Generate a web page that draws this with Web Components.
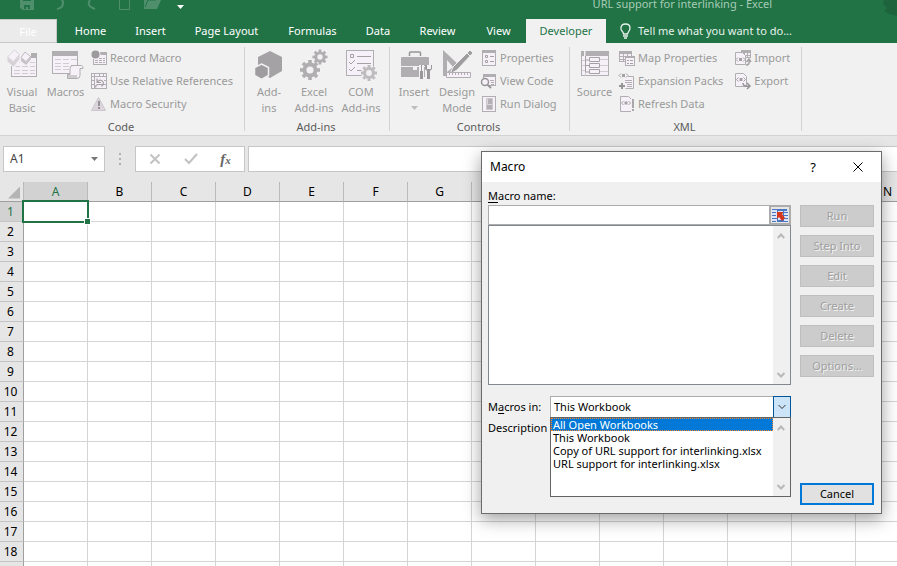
<!DOCTYPE html>
<html lang="en">
<head>
<meta charset="utf-8">
<title>URL support for interlinking - Excel</title>
<style>
html, body { height: 100%; margin: 0; overflow: hidden; }
body { font: 11px/16px "Noto Sans", "Open Sans", sans-serif; color: #000; }
</style>
</head>
<body>
<excel-window></excel-window>
<script>
const define = (name, html) => customElements.define(name, class extends HTMLElement {
  connectedCallback() {
    if (this.shadowRoot) return;
    const root = this.attachShadow({ mode: 'open' });
    const t = document.createElement('template');
    t.innerHTML = typeof html === 'function' ? html(this) : html;
    root.append(t.content.cloneNode(true));
  }
});

/* ---------- icons ---------- */
const G = '#b1aeb1', D = '#a5a2a5', P = '#f6f1f8', L = '#cfcbcf';
const sheet = (x, y, w, h, bar) => `<rect x="${x + .5}" y="${y + .5}" width="${w - 1}" height="${h - 1}" fill="${P}" stroke="${G}"/><rect x="${x}" y="${y}" width="${w}" height="${bar}" fill="${G}"/>`;
const gear = (cx, cy, r, c) => {
  let s = '';
  for (let i = 0; i < 4; i++) s += `<rect x="${cx - r * .18}" y="${cy - r}" width="${r * .36}" height="${r * 2}" fill="${c}" transform="rotate(${i * 45} ${cx} ${cy})"/>`;
  return s + `<circle cx="${cx}" cy="${cy}" r="${r * .75}" fill="${c}"/><circle cx="${cx}" cy="${cy}" r="${r * .36}" fill="#f1f1f1"/>`;
};
const code = (x, y) => `<path d="M${x + 2} ${y - 2}l-2 2 2 2M${x + 7} ${y - 2}l2 2-2 2" fill="none" stroke="${D}"/><rect x="${x + 3}" y="${y - 1.5}" width="3" height="3" fill="${D}"/>`;
const ICONS = {
  vb: [32, 32, `<rect x="5.500" y="8.500" width="25" height="20" fill="${P}" stroke="${G}"/><path d="M25 5h6v5h-6z" fill="${G}"/><path d="M9 14.500h5m2 0h6m2 0h5M8 18.500h6m2 0h6m2 0h5M8 22.500h6m2 0h6m2 0h5M8 25.500h6m2 0h6m2 0h5" stroke="${L}"/><path d="M9 1l5 4 4-3 7 6-6 8-5-2-6 6-8-6z" fill="#f1f1f1"/><path d="M8.500 2l5 4.500-6 7-6-4.500z" fill="${P}" stroke="${L}" stroke-width=".8"/><path d="M1.500 9.500l6 4.500 6-7v4l-6 7.500-6-5z" fill="#d6d1d7"/><path d="M19 4l5.500 4.500-4.500 5-5-4z" fill="${P}" stroke="${G}" stroke-width=".8"/><path d="M15 10l5 4 5-5.500v3l-5 5.500-5-4z" fill="#c6c1c7"/>`],
  macros: [32, 32, sheet(2, 3, 26, 23, 5) + `<path d="M5 11.500h6m2 0h6m2 0h6M5 15.500h6m2 0h6M5 18.500h6m2 0h6M5 21.500h6m2 0h6" stroke="${L}"/><path d="M21 17.500h10.500q1.500 0 1.500 3h-3v7q0 3-3 3h-9.500v-4h2.500v-6q0-3 3-3z" fill="${P}" stroke="${G}"/><path d="M18 27h9v3h-9z" fill="${L}"/>`],
  record: [16, 16, sheet(2, 2, 14, 13, 3) + `<path d="M4 8.500h3m1 0h3m1 0h2M4 10.500h3m1 0h3m1 0h2M4 12.500h3m1 0h3m1 0h2" stroke="${G}"/><circle cx="4.500" cy="4.500" r="5" fill="#f1f1f1"/><circle cx="4.500" cy="4.500" r="4" fill="#9d9a9d"/>`],
  relref: [16, 16, `<rect x=".5" y=".5" width="15" height="15" fill="${P}" stroke="${G}"/><path d="M0 3.500h16M0 7.500h4M0 11.500h4M3.500 0v16M8.500 0v4M12.500 0v4M13 7.500h3M13 11.500h3" stroke="${G}"/><path d="M4.500 14.500q0-3 3-3h6M6 5.500v4h4M6.500 9q3-4 6 .5 0 2-2 4" fill="none" stroke="${D}" stroke-width="1.200"/>`],
  warn: [16, 16, `<path d="M7.500 1.500l7 13h-14z" fill="#dcd6dc" stroke="#cbc6cb"/><path d="M7 5h2v5H7zM7 11h2v2H7z" fill="#969396"/>`],
  addins: [32, 32, `<path d="M17 3l12 6v14l-12 7-12-7V9z" fill="#a5a2a5"/><path d="M8.500 16l7 3.500v8l-7 4-7-4v-8z" fill="#9f9c9f" stroke="#f1f1f1" stroke-width="1.500"/>`],
  gears: [32, 32, gear(12, 22, 10, G) + gear(22, 9, 7.5, G)],
  com: [32, 32, `<rect x="1.500" y="2.500" width="27" height="25" fill="${P}" stroke="${G}"/><path d="M5.500 6.500h3v3h-3zM4 14l2 2 4-4M4 21l2 2 4-4M12 8.500h14M12 15.500h14M12 22.500h6" fill="none" stroke="${D}"/><circle cx="24" cy="25" r="8" fill="#f1f1f1"/>` + gear(24, 25, 8, '#bfbcbf')],
  insert: [32, 32, `<path d="M11.500 8V5q0-1 1-1h9q1 0 1 1v3" fill="none" stroke="#979497" stroke-width="1.500"/><path d="M4 9h26q1 0 1 1v8H3v-8q0-1 1-1zM3 19h12v3h4v-3h12v10H3z" fill="${G}"/><path d="M21 17h5v15h-5zM27 17h6v15h-6z" fill="#f1f1f1"/><path d="M23 17h1v6h1v8h-3v-8h1zM27 17v4l2 2v8h3v-8l2-2v-4h-1v4h-4v-4z" fill="#9b989b"/><path d="M15 19h4v3h-4z" fill="#f1f1f1"/>`],
  design: [32, 32, `<path d="M2 2v26h6l11-10zM6 12l6 7-6 5z" fill="${G}" fill-rule="evenodd"/><path d="M29 2l3 3-16 17-7 4 3-7z" fill="#9f9c9f" stroke="#f1f1f1"/><path d="M26 5l3 3" stroke="#f1f1f1"/><path d="M5.500 24.500h24v5h-24z" fill="${P}" stroke="${G}"/><path d="M8.500 25v2m3-2v2m3-2v2m3-2v2m3-2v2m3-2v2m3-2v2" stroke="${G}"/>`],
  props: [16, 16, sheet(1, 0, 14, 16, 3) + `<path d="M4.500 5.500h2v2h-2zM4.500 10.500h2v2h-2zM9 6.500h4M9 11.500h4" fill="none" stroke="${D}"/>`],
  viewcode: [16, 16, sheet(2, 1, 13, 12, 3) + `<path d="M9 7.500h4M10 9.500h3M10 11.500h3" stroke="${G}"/><circle cx="4" cy="9" r="3.500" fill="${P}" stroke="#979497" stroke-width="1.500"/><path d="M7 12l3 3" stroke="#979497" stroke-width="2"/>`],
  rundlg: [16, 16, `<rect x="1.500" y=".5" width="13" height="15" fill="${P}" stroke="${G}"/><path d="M5.500 2.500h6v11h-6z" fill="#dcd7dc" stroke="#cbc6cb"/><path d="M7 3h4v5H7zM6 9h5v4H6z" fill="#b3b0b3"/>`],
  source: [32, 32, sheet(2, 3, 28, 25, 5) + `<path d="M6.500 3v25M3 12.500h3M3 17.500h3M3 22.500h3M21 11.500h8M21 17.500h8M21 23.500h8" stroke="${L}"/><path d="M5.500 3v5" stroke="#f1f1f1"/><path d="M6.500 8v16H10M6.500 12H10M6.500 17.500H10M10.500 9.500h10v4h-10zM10.500 15.500h10v4h-10zM10.500 21.500h10v4h-10z" fill="${P}" stroke="${D}"/>`],
  map: [16, 16, sheet(0, 1, 13, 11, 3) + `<path d="M0 6.500h12M4.500 4v8M8.500 4v8M0 9.500h8" stroke="${G}"/>` + sheet(6, 6, 10, 10, 2) + `<path d="M8 10.500h2m1 0h3M8 13.500h2m1 0h3" stroke="${D}"/>`],
  expand: [16, 16, `<path d="M4.500 3.500h10v12h-8" fill="${P}" stroke="${G}"/><path d="M6 7.500h7M6 9.500h7M8 11.500h5M8 13.500h5" stroke="${G}"/><path d="M3 10v6M0 13h6" stroke="#979497" stroke-width="2"/><path d="M0 0h9v5H0z" fill="#f1f1f1"/>` + code(0, 2.5)],
  refresh: [16, 16, `<path d="M1.500.5h8l3 3v12h-11z" fill="${P}" stroke="${G}"/>` + code(2.5, 7) + `<path d="M12 2h4v14h-4z" fill="#f1f1f1"/><path d="M13 3h2v9h-2zM13 13h2v2h-2z" fill="#aaa7aa"/>`],
  imp: [16, 16, sheet(6, 0, 10, 8, 3) + `<path d="M6 5.500h10M9.500 3v4M12.500 3v4" stroke="${G}"/><path d="M.5 2.500h7l3 3v9H.5z" fill="${P}" stroke="${G}"/>` + code(1, 9.5) + `<path d="M11 15q4 0 3-5M11.500 12l2.500-3 2 3" fill="none" stroke="${D}" stroke-width="1.500"/>`],
  exp: [16, 16, `<path d="M.5.5h8l3 3v10H.5z" fill="${P}" stroke="${G}"/>` + code(1.5, 6.5) + `<path d="M8 10q0 4 6 3M12 10l3 3-3 3" fill="none" stroke="#979497" stroke-width="1.500"/>`],
  bulb: [16, 16, `<path d="M5.500 11q0-1.500-1.500-3T3 5q0-4 4.500-4T12 5q0 1.500-1 3t-1.500 3zM5 13h5M6 15h3" fill="none" stroke="#e6f2ea" stroke-width="1.300"/>`],
  save: [16, 16, `<path d="M1 0h14v14H4l-3-2z" fill="#4f8f6c"/><path d="M4 0h8v5H4zM5 9h6v4H9v-2H7v2H5z" fill="#217346"/>`],
  undo: [16, 16, `<path d="M4 2h3q4 1 4 5 0 5-6 6" fill="none" stroke="#4f8f6c" stroke-width="2"/>`],
  redo: [16, 16, `<path d="M12 13q-9-3-5-9" fill="none" stroke="#4f8f6c" stroke-width="2"/>`],
  doc: [16, 16, `<path d="M2.500 0v13.500h10V0" fill="none" stroke="#4f8f6c"/>`],
  folder: [18, 16, `<path d="M1 0h14v4h3l-4 9H1z" fill="#4f8f6c"/><path d="M2 11l3-7h8" fill="none" stroke="#217346"/>`],
  art: [16, 24, `<path d="M3 0h13v24q-9-2-13-5l3-3-4-4 1-4z" fill="#1d633c"/>`],
  caret: [7, 4, `<path d="M0 0h7L3.500 4z" fill="currentColor"/>`],
  x: [12, 12, `<path d="M1.500 1.500l9 9M10.500 1.500l-9 9" stroke="currentColor" stroke-width="var(--sw,1)"/>`],
  check: [14, 12, `<path d="M1 6l4 4 8-9" fill="none" stroke="currentColor" stroke-width="2.200"/>`],
  up: [8, 6, `<path d="M.8 5L4 1.500 7.200 5" fill="none" stroke="currentColor" stroke-width="var(--sw,1)"/>`],
  down: [8, 6, `<path d="M.5 1L4 4.500 7.500 1" fill="none" stroke="currentColor" stroke-width="var(--sw,1)"/>`],
  ref: [16, 13, `<path d="M0 0h16v13H0z" fill="#dbe5f5"/><path d="M0 0h5v1H0zM6 0h9v2H6zM0 3h4v1H0zM0 6h4v1H0zM0 9h5v1H0zM0 12h4v1H0zM6 11h5v2H6zM12 12h4v1h-4zM12 9h4v1h-4zM12 6h4v1h-4zM12 3h4v1h-4zM5 0h1v13H5zM11 0h1v13h-1z" fill="#4a76c4"/><path d="M5 3h6v1l-1 1 3 4-3 3-3-4-2 2z" fill="#d6361c"/>`]
};
define('ui-icon', host => {
  const [w, h, body] = ICONS[host.getAttribute('name')];
  return `<style>:host{display:block;flex:none}svg{display:block;overflow:visible}</style><svg width="${w}" height="${h}" viewBox="0 0 ${w} ${h}" aria-hidden="true">${body}</svg>`;
});

/* ---------- title bar and tabs ---------- */
define('title-bar', `<style>
:host{display:flex;height:19px;align-items:flex-end;background:#217346;color:#a6cbb5;overflow:hidden;flex:none}
.in{display:flex;align-items:center;height:31px;flex:1}
.q{display:flex;gap:10px;padding-left:19px;align-items:center;flex:1}
.caret{color:#fff;margin:6px 0 0 6px}
.undo{margin-left:7px}
.sp{margin:0 8px 0 5px}
.t{padding-right:109px}
</style><div class="in"><div class="q"><ui-icon name="save"></ui-icon><ui-icon name="undo" class="undo"></ui-icon><ui-icon name="redo" class="sp"></ui-icon><ui-icon name="doc"></ui-icon><ui-icon name="folder"></ui-icon><ui-icon name="caret" class="caret"></ui-icon></div><div class="t">URL support for interlinking - Excel</div><ui-icon name="art"></ui-icon></div>`);

define('ribbon-tabs', `<style>
:host{display:flex;height:24px;background:#217346;flex:none}
button{all:unset;box-sizing:border-box;width:var(--w);text-align:center;color:#fff;height:24px;line-height:24px;white-space:nowrap}
.file{background:#ebebeb;border:1px solid #c8c8c8;border-left:0;margin-right:3px}
.on{background:#f1f1f1;color:#217346}
.tell{display:flex;align-items:center;gap:4px;width:auto;padding-left:12px;color:#e6f2ea}
</style>
<button class="file" style="--w:57px">File</button><button style="--w:61px">Home</button><button style="--w:59px">Insert</button><button style="--w:93px">Page Layout</button><button style="--w:79px">Formulas</button><button style="--w:52px">Data</button><button style="--w:67px">Review</button><button style="--w:55px">View</button><button class="on" style="--w:80px">Developer</button><button class="tell"><ui-icon name="bulb"></ui-icon>Tell me what you want to do...</button>`);

/* ---------- ribbon ---------- */
define('ribbon-group', host => `<style>
:host{display:block;position:relative;box-sizing:border-box;flex:none}
:host::after{content:"";position:absolute;right:0;top:1px;width:1px;height:84px;background:#d2d2d2}
.b{display:flex;height:69px;margin-bottom:4px}
.l{text-align:center;color:#5c5c5c;padding-right:3px}
</style><div class="b"><slot></slot></div><div class="l">${host.getAttribute('label')}</div>`);
define('big-button', host => `<style>
:host{display:block;flex:none;width:var(--w)}
button{all:unset;display:flex;flex-direction:column;align-items:center;width:100%;padding-top:2px;color:#9a9a9a;text-align:center;white-space:nowrap}
ui-icon{height:36px}
.d{height:4px;margin-top:6px;color:#bdbdbd}
</style><button disabled><ui-icon name="${host.getAttribute('icon')}"></ui-icon><span><slot></slot></span>${host.hasAttribute('drop') ? '<ui-icon class="d" name="caret"></ui-icon>' : ''}</button>`);
define('small-button', host => `<style>
:host{display:block}
button{all:unset;display:flex;align-items:center;gap:3px;height:23px;color:#9a9a9a;white-space:nowrap}
</style><button disabled><ui-icon name="${host.getAttribute('icon')}"></ui-icon><slot></slot></button>`);
define('excel-ribbon', `<style>
:host{display:flex;background:#f1f1f1;padding-top:3px;border-bottom:1px solid #d2d2d2;flex:none}
.c{margin-left:var(--m)}
</style>
<ribbon-group label="Code" style="width:245px">
<big-button icon="vb" style="--w:44px">Visual<br>Basic</big-button><big-button icon="macros" style="--w:43px">Macros</big-button>
<div class="c" style="--m:4px"><small-button icon="record">Record Macro</small-button><small-button icon="relref">Use Relative References</small-button><small-button icon="warn">Macro Security</small-button></div>
</ribbon-group>
<ribbon-group label="Add-ins" style="width:145px">
<big-button icon="addins" style="--w:48px">Add-<br>ins</big-button><big-button icon="gears" style="--w:42px">Excel<br>Add-ins</big-button><big-button icon="com" style="--w:52px">COM<br>Add-ins</big-button>
</ribbon-group>
<ribbon-group label="Controls" style="width:180px">
<big-button icon="insert" drop style="--w:48px">Insert</big-button><big-button icon="design" style="--w:38px">Design<br>Mode</big-button>
<div class="c" style="--m:5px"><small-button icon="props">Properties</small-button><small-button icon="viewcode">View Code</small-button><small-button icon="rundlg">Run Dialog</small-button></div>
</ribbon-group>
<ribbon-group label="XML" style="width:232px">
<big-button icon="source" style="--w:49px">Source</big-button>
<div class="c" style="--m:0px"><small-button icon="map">Map Properties</small-button><small-button icon="expand">Expansion Packs</small-button><small-button icon="refresh">Refresh Data</small-button></div>
<div class="c" style="--m:12px"><small-button icon="imp">Import</small-button><small-button icon="exp">Export</small-button></div>
</ribbon-group>`);

/* ---------- formula bar ---------- */
define('formula-bar', `<style>
:host{display:flex;padding:10px 0 10px 3px;background:#e6e6e6;flex:none}
.box{box-sizing:border-box;height:26px;background:#fff;border:1px solid #c6c6c6;display:flex;align-items:center}
.name{width:102px;padding-right:6px;color:#777}
input{all:unset;flex:1;min-width:0;font-size:12px;color:#444;padding-left:6px}
.dots{width:30px;display:flex;flex-direction:column;align-items:center;justify-content:center;gap:3px}
.dots i{width:2px;height:2px;background:#b0b0b0}
.btns{width:110px;justify-content:space-around;padding:0 2px;color:#c3c3c3;--sw:2}
button{all:unset}
.fx{color:#666;font:italic bold 15px/20px "Liberation Serif",serif}
.fx small{font-size:11px}
.f{flex:1;margin-left:3px;border-right:0}
</style>
<div class="box name"><input aria-label="Name box" value="A1"><ui-icon name="caret"></ui-icon></div>
<div class="dots"><i></i><i></i><i></i></div>
<div class="box btns"><button aria-label="Cancel"><ui-icon name="x"></ui-icon></button><button aria-label="Enter"><ui-icon name="check"></ui-icon></button><button class="fx" aria-label="Insert function">f<small>x</small></button></div>
<div class="box f"><input aria-label="Formula"></div>`);

/* ---------- worksheet ---------- */
define('sheet-grid', () => {
  const cols = [...'ABCDEFGHIJKLMN'];
  let rows = '';
  for (let r = 1; r < 19; r++) rows += `<tr><th scope="row"${r === 1 ? ' class="s"' : ''}>${r}</th>${cols.map(c => `<td>${r === 1 && c === 'A' ? '<div class="sel"></div>' : ''}</td>`).join('')}</tr>`;
  rows += `<tr><th></th>${cols.map(() => '<td></td>').join('')}</tr>`;
  return `<style>
:host{display:block;flex:1;min-height:0;overflow:hidden;background:#fff}
table{border-collapse:separate;border-spacing:0;table-layout:fixed;width:920px}
th,td{box-sizing:border-box;height:20px;padding:0;border-right:1px solid #d4d4d4;border-bottom:1px solid #d4d4d4}
th{background:#e6e6e6;font-weight:400;font-size:12px;line-height:18px;text-align:center}
thead th{border-right-color:#bababa;border-bottom-color:#9f9f9f;width:64px}
thead th:first-child{width:24px}
tbody th{border-right-color:#9f9f9f;border-bottom-color:#c4c4c4;padding:1px 2px 0 0}
th.s{background:#d2d2d2;color:#217346}
td{position:relative}
.sel{position:absolute;inset:-2px;border:2px solid #217346;z-index:1}
.sel::after{content:"";position:absolute;right:-4px;bottom:-4px;width:5px;height:5px;background:#217346;border:1px solid #fff}
.tri{width:12px;height:12px;margin:2px 0 0 8px;background:#b4b4b4;clip-path:polygon(100% 0,100% 100%,0 100%)}
</style><table><thead><tr><th aria-label="Select all"><div class="tri"></div></th>${cols.map((c, i) => `<th scope="col"${i ? '' : ' class="s"'}>${c}</th>`).join('')}</tr></thead><tbody>${rows}</tbody></table>`;
});

/* ---------- dialog ---------- */
define('dialog-button', host => `<style>
:host{display:block}
button{box-sizing:border-box;display:block;width:100%;height:22px;padding:0;font:inherit;color:#000;background:#e1e1e1;border:2px solid #0078d7;border-radius:0}
button:disabled{background:#ccc;border:1px solid #bfbfbf;color:#a0a0a0;text-shadow:1px 1px 0 #f4f4f4}
</style><button${host.hasAttribute('off') ? ' disabled' : ''}><slot></slot></button>`);
define('scroll-bar', `<style>
:host{display:flex;flex-direction:column;justify-content:space-between;align-items:center;box-sizing:border-box;width:17px;padding:7px 2px 6px 0;background:#f0f0f0;color:#b8b8b8;--sw:2}
</style><ui-icon name="up"></ui-icon><ui-icon name="down"></ui-icon>`);
define('macro-dialog', `<style>
:host{display:block;box-sizing:border-box;position:absolute;left:481px;top:151px;width:401px;border:1px solid #6b6b6b;background:#f0f0f0;box-shadow:0 5px 16px rgba(0,0,0,.38);z-index:5}
header{display:flex;align-items:center;height:30px;background:#fff;padding:0 17px 0 8px}
h1{flex:1;font:inherit;font-size:12px;margin:0}
header button{all:unset;margin-left:36px;font-size:13px;line-height:16px}
.body{display:grid;grid-template-columns:1fr 74px;gap:9px;padding:6px 7px 8px 6px}
label{display:block;line-height:16px}
u{text-underline-offset:2px}
.ref{display:flex;height:20px;box-sizing:border-box;border:1px solid #acacac;margin-top:1px}
.ref input{all:unset;flex:1;background:#fff}
.ref button{all:unset;display:flex;align-items:center;justify-content:center;width:20px;background:#e6e6e6;border-left:1px solid #acacac;box-shadow:inset 0 0 0 1px #acacac}
.list{display:flex;justify-content:flex-end;height:160px;box-sizing:border-box;border:1px solid #828790;background:#fff;margin-bottom:11px}
.row{display:grid;grid-template-columns:62px 1fr;align-items:center}
.combo{position:relative;display:grid}
select{appearance:none;box-sizing:border-box;width:100%;height:22px;padding:0 3px;margin:0;border:1px solid #acacac;border-radius:0;background:#fff;font:inherit;color:#000}
.arrow{position:absolute;right:0;top:0;width:16px;height:20px;border:1px solid #005499;background:#cce4f7;display:flex;align-items:center;justify-content:center;color:#333;pointer-events:none}
.menu{position:absolute;left:0;right:0;top:21px;height:80px;box-sizing:border-box;border:1px solid #646464;background:#fff;display:flex;z-index:2}
.opts{flex:1;line-height:13px}
.opts div{padding-left:2px;white-space:nowrap}
.opts .on{background:#0078d7;color:#fff;outline:1px dotted #ff8728;outline-offset:-1px}
.desc{line-height:20px;margin-bottom:67px}
.side{display:flex;flex-direction:column;gap:8px;padding-top:17px}
.side :last-child{margin-top:auto}
</style>
<header><h1>Macro</h1><button aria-label="Help">?</button><button aria-label="Close"><ui-icon name="x"></ui-icon></button></header>
<div class="body"><div>
<label for="n"><u>M</u>acro name:</label>
<div class="ref"><input id="n"><button aria-label="Select range"><ui-icon name="ref"></ui-icon></button></div>
<div class="list"><scroll-bar></scroll-bar></div>
<div class="row"><label for="m">M<u>a</u>cros in:</label><div class="combo"><select id="m"><option>This Workbook</option></select><span class="arrow"><ui-icon name="down"></ui-icon></span>
<div class="menu" role="listbox" aria-label="Macros in"><div class="opts"><div class="on" role="option" aria-selected="true">All Open Workbooks</div><div role="option">This Workbook</div><div role="option">Copy of URL support for interlinking.xlsx</div><div role="option">URL support for interlinking.xlsx</div></div><scroll-bar></scroll-bar></div></div></div>
<div class="desc">Description</div>
</div>
<div class="side"><dialog-button off>Run</dialog-button><dialog-button off>Step Into</dialog-button><dialog-button off>Edit</dialog-button><dialog-button off>Create</dialog-button><dialog-button off>Delete</dialog-button><dialog-button off>Options...</dialog-button><dialog-button>Cancel</dialog-button></div>
</div>`);

define('excel-window', `<style>
:host{display:flex;flex-direction:column;height:100%;overflow:hidden;position:relative}
</style><title-bar></title-bar><ribbon-tabs></ribbon-tabs><excel-ribbon></excel-ribbon><formula-bar></formula-bar><sheet-grid></sheet-grid><macro-dialog></macro-dialog>`);
</script>
</body>
</html>
